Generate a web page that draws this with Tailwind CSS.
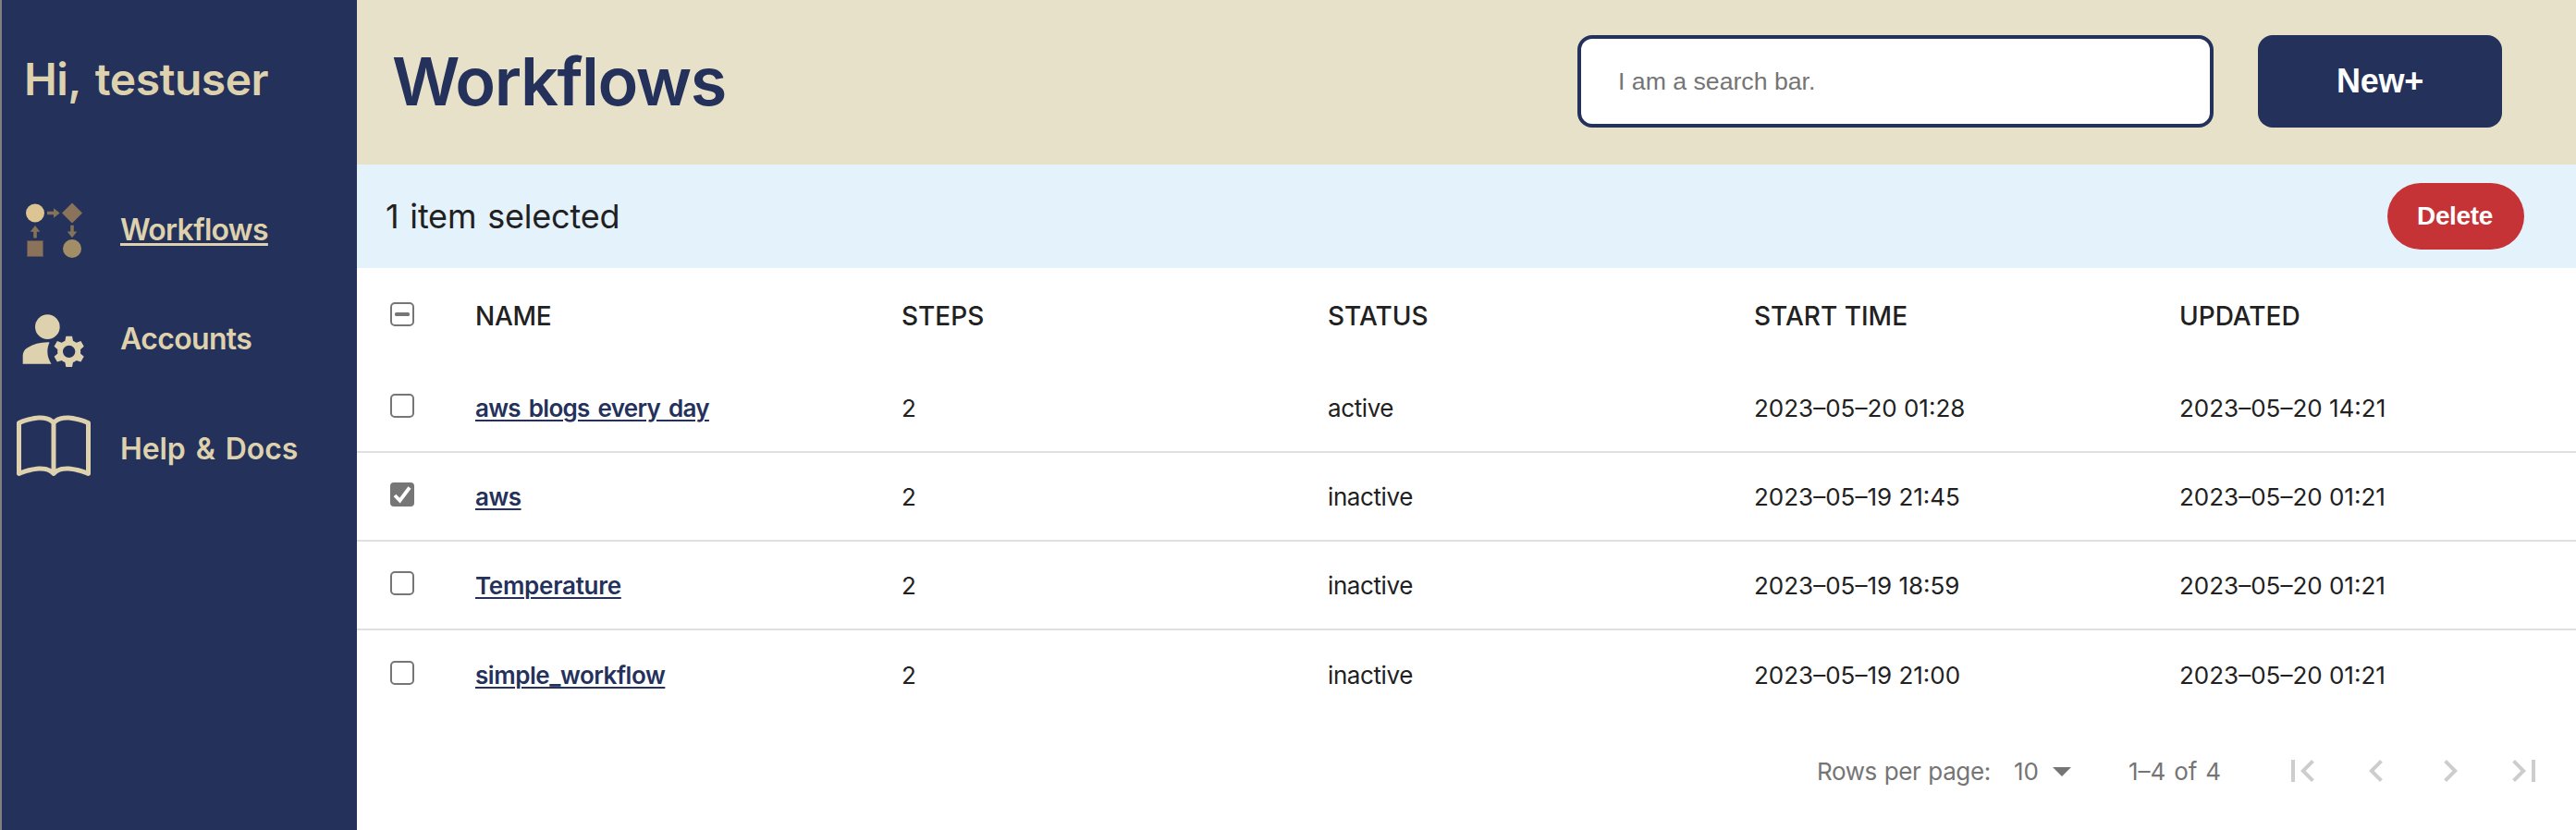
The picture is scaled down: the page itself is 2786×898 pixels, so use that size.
<!DOCTYPE html>
<html lang="en">
<head>
<meta charset="utf-8">
<title>Workflows</title>
<script src="https://cdn.jsdelivr.net/npm/@tailwindcss/browser@4"></script>
</head>
<body class="flex h-[898px] w-[2786px] overflow-hidden bg-white font-['Inter',sans-serif] text-[#212121]">

<aside class="flex w-[386px] shrink-0 flex-col border-l-2 border-[#808080] bg-[#24315a] pl-4 text-[#ded1ae]">
  <h2 class="mt-[56px] pl-2 text-[48px] leading-[60px] font-semibold tracking-[-0.5px] [word-spacing:4px]">Hi, testuser</h2>
  <nav class="mt-[92px] flex flex-col gap-[38.5px] text-[32px] font-semibold">
    <a class="flex h-20 items-center gap-8">
      <svg class="size-20" viewBox="0 0 80 80">
        <circle cx="20" cy="22.5" r="10" fill="#dcc592"/>
        <path d="M60 11.5l11 11-11 11-11-11z" fill="#8a725b"/>
        <circle cx="60" cy="61" r="10" fill="#a18e66"/>
        <path d="M11.5 52.5h17v17h-17z" fill="#8a725b" stroke="#5c5359" stroke-width="1"/>
        <g fill="#837459">
          <path d="M33 20.8h7v-3.6l6.7 5.4-6.7 5.2v-3.5h-7z"/>
          <path d="M18.2 49.5v-6.8h-3.5l5.3-6.6 5.3 6.6h-3.5v6.8z"/>
          <path d="M58.2 35.8v6.8h-3.5l5.3 6.6 5.3-6.6h-3.5v-6.8z"/>
        </g>
      </svg>
      <span class="pt-px tracking-[-0.7px] underline decoration-[3px] underline-offset-[3px]">Workflows</span>
    </a>
    <a class="flex h-20 items-center gap-8">
      <svg class="size-20" viewBox="0 0 24 24" fill="currentColor">
        <circle cx="10" cy="8" r="4"/>
        <path d="M10.67 13.02C10.45 13.01 10.23 13 10 13c-2.42 0-4.68.67-6.61 1.82-.88.52-1.39 1.5-1.39 2.53V20h9.26c-.79-1.13-1.26-2.51-1.26-4 0-1.07.25-2.07.67-2.98zM20.75 16c0-.22-.03-.42-.06-.63l1.14-1.01-1-1.73-1.45.49c-.32-.27-.68-.48-1.08-.63L18 11h-2l-.3 1.49c-.4.15-.76.36-1.08.63l-1.45-.49-1 1.73 1.14 1.01c-.03.21-.06.41-.06.63s.03.42.06.63l-1.14 1.01 1 1.73 1.45-.49c.32.27.68.48 1.08.63L16 21h2l.3-1.49c.4-.15.76-.36 1.08-.63l1.45.49 1-1.73-1.14-1.01c.03-.21.06-.41.06-.63zM17 18c-1.1 0-2-.9-2-2s.9-2 2-2 2 .9 2 2-.9 2-2 2z"/>
      </svg>
      <span class="pt-px tracking-[-0.65px]">Accounts</span>
    </a>
    <a class="flex h-20 items-center gap-8">
      <svg class="size-20" viewBox="0 0 16 16" fill="currentColor">
        <path d="M1 2.828c.885-.37 2.154-.769 3.388-.893 1.33-.134 2.458.063 3.112.752v9.746c-.935-.53-2.12-.603-3.213-.493-1.18.12-2.37.461-3.287.811V2.828zm7.5-.141c.654-.689 1.782-.886 3.112-.752 1.234.124 2.503.523 3.388.893v9.923c-.918-.35-2.107-.692-3.287-.81-1.094-.111-2.278-.039-3.213.492V2.687zM8 1.783C7.015.936 5.587.81 4.287.94c-1.514.153-3.042.672-3.994 1.105A.5.5 0 0 0 0 2.5v11a.5.5 0 0 0 .707.455c.882-.4 2.303-.881 3.68-1.02 1.409-.142 2.59.087 3.223.877a.5.5 0 0 0 .78 0c.633-.79 1.814-1.019 3.222-.877 1.378.139 2.8.62 3.681 1.02A.5.5 0 0 0 16 13.5v-11a.5.5 0 0 0-.293-.455c-.952-.433-2.48-.952-3.994-1.105C10.413.809 8.985.936 8 1.783z"/>
      </svg>
      <span class="pt-px tracking-[-0.1px] [word-spacing:3px]">Help &amp; Docs</span>
    </a>
  </nav>
</aside>

<main class="flex grow flex-col">
  <header class="flex h-[178px] items-center bg-[#e8e1c9] pr-20 pb-[2px] pl-[38px]">
    <h1 class="grow text-[72px] leading-[80px] font-semibold tracking-[-1.45px] text-[#24315a]">Workflows</h1>
    <div class="flex h-[100px] w-[688px] items-center rounded-2xl border-4 border-[#24315a] bg-white pl-10 font-['Liberation_Sans',sans-serif] text-[26.67px] text-[#757575]">I am a search bar.</div>
    <button class="ml-12 h-[100px] w-[264px] rounded-2xl bg-[#24315a] font-['Liberation_Sans',sans-serif] text-[36px] font-bold tracking-[-0.3px] text-white">New+</button>
  </header>

  <section class="flex h-28 items-center justify-between bg-[#e4f2fc] pr-14 pl-[31px]">
    <p class="text-[36px] tracking-[-0.2px] [word-spacing:2px]">1 item selected</p>
    <button class="h-[72px] w-[148px] rounded-full bg-[#c53337] pr-0.5 font-['Liberation_Sans',sans-serif] text-[28px] font-bold tracking-[-0.35px] text-white">Delete</button>
  </section>

  <section class="text-[26px]">
    <div class="grid h-[104px] grid-cols-[128px_461px_461px_461px_460px_1fr] items-center text-[28px] font-medium">
      <span class="pl-9"><svg class="mb-1 size-[26px]" viewBox="0 0 26 26"><rect x="1" y="1" width="24" height="24" rx="4" fill="#fff" stroke="#767676" stroke-width="2"/><rect x="5" y="11" width="16" height="4" rx="1.5" fill="#767676"/></svg></span>
      <span class="tracking-[-0.3px]">NAME</span><span>STEPS</span><span>STATUS</span><span>START TIME</span><span>UPDATED</span>
    </div>
    <div class="grid h-24 grid-cols-[128px_461px_461px_461px_460px_1fr] items-center border-b-2 border-[#e0e0e0]">
      <span class="pl-9"><svg class="mb-[5px] size-[26px]" viewBox="0 0 26 26"><rect x="1" y="1" width="24" height="24" rx="4" fill="#fff" stroke="#767676" stroke-width="2"/></svg></span>
      <a class="font-semibold tracking-[-0.7px] text-[#24315a] underline decoration-2 underline-offset-[3px] [word-spacing:3px]">aws blogs every day</a><span>2</span><span class="tracking-[-0.4px]">active</span><span>2023–05–20 01:28</span><span>2023–05–20 14:21</span>
    </div>
    <div class="grid h-24 grid-cols-[128px_461px_461px_461px_460px_1fr] items-center border-b-2 border-[#e0e0e0]">
      <span class="pl-9"><svg class="mb-[5px] size-[26px]" viewBox="0 0 26 26"><rect width="26" height="26" rx="4" fill="#767676"/><path d="M5 14l5.5 5.5L21 5.5" fill="none" stroke="#fff" stroke-width="3.8"/></svg></span>
      <a class="font-semibold tracking-[-0.5px] text-[#24315a] underline decoration-2 underline-offset-[3px]">aws</a><span>2</span><span class="tracking-[-0.4px]">inactive</span><span>2023–05–19 21:45</span><span>2023–05–20 01:21</span>
    </div>
    <div class="grid h-24 grid-cols-[128px_461px_461px_461px_460px_1fr] items-center border-b-2 border-[#e0e0e0]">
      <span class="pl-9"><svg class="mb-[5px] size-[26px]" viewBox="0 0 26 26"><rect x="1" y="1" width="24" height="24" rx="4" fill="#fff" stroke="#767676" stroke-width="2"/></svg></span>
      <a class="font-semibold tracking-[-0.27px] text-[#24315a] underline decoration-2 underline-offset-[3px]">Temperature</a><span>2</span><span class="tracking-[-0.4px]">inactive</span><span>2023–05–19 18:59</span><span>2023–05–20 01:21</span>
    </div>
    <div class="grid h-24 grid-cols-[128px_461px_461px_461px_460px_1fr] items-center">
      <span class="pl-9"><svg class="mb-[5px] size-[26px]" viewBox="0 0 26 26"><rect x="1" y="1" width="24" height="24" rx="4" fill="#fff" stroke="#767676" stroke-width="2"/></svg></span>
      <a class="font-semibold tracking-[-0.45px] text-[#24315a] underline decoration-2 underline-offset-[3px]">simple_workflow</a><span>2</span><span class="tracking-[-0.4px]">inactive</span><span>2023–05–19 21:00</span><span>2023–05–20 01:21</span>
    </div>
  </section>

  <footer class="flex h-28 items-center pl-[1579px] text-[26px] text-[#757575]">
    <span class="w-[213px] tracking-[-0.4px] [word-spacing:1px]">Rows per page:</span>
    <span class="w-[28px]">10</span>
    <svg class="size-12 shrink-0" viewBox="0 0 24 24" fill="#757575"><path d="M7 10l5 5 5-5z"/></svg>
    <span class="ml-12 w-[148px] [word-spacing:1.5px]">1–4 of 4</span>
    <div class="flex text-[#cdcdcd]">
      <span class="flex w-20 justify-center"><svg class="size-12" viewBox="0 0 24 24" fill="currentColor"><path d="M18.41 16.59L13.82 12l4.59-4.59L17 6l-6 6 6 6zM6 6h2v12H6z"/></svg></span>
      <span class="flex w-20 justify-center"><svg class="size-12" viewBox="0 0 24 24" fill="currentColor"><path d="M15.41 7.41L14 6l-6 6 6 6 1.41-1.41L10.83 12z"/></svg></span>
      <span class="flex w-20 justify-center"><svg class="size-12" viewBox="0 0 24 24" fill="currentColor"><path d="M10 6L8.59 7.41 13.17 12l-4.58 4.59L10 18l6-6z"/></svg></span>
      <span class="flex w-20 justify-center"><svg class="size-12" viewBox="0 0 24 24" fill="currentColor"><path d="M5.59 7.41L10.18 12l-4.59 4.59L7 18l6-6-6-6zM16 6h2v12h-2z"/></svg></span>
    </div>
  </footer>
</main>
</body>
</html>
